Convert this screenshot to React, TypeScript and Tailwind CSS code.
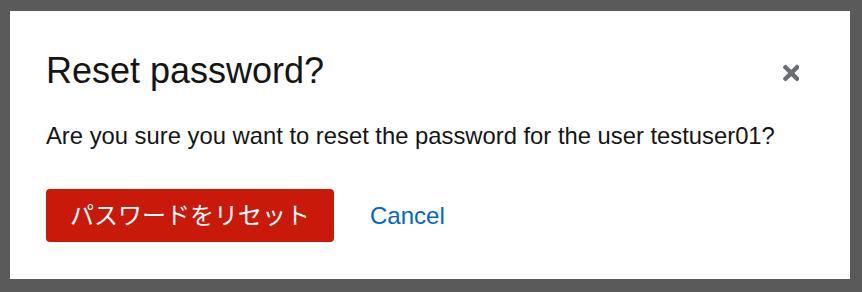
export default function App() {
  return (
    <div className="h-[292px] w-[862px] bg-[#5a5a5a] pl-[10px] pt-[11px] font-['Liberation_Sans','Noto_Sans_CJK_JP',sans-serif]">
      <div className="flex h-[268px] w-[840px] flex-col bg-white px-[36px] pt-[36px]">
        <div className="flex items-start justify-between">
          <h1 className="text-[36px] leading-[47px] text-[#151515]">Reset password?</h1>
          <button className="mr-[15px] mt-[14px] flex">
            <svg width="16.5" height="24" viewBox="0 0 352 512" fill="#6a6e73">
              <path d="M242.72 256l100.07-100.07c12.28-12.28 12.28-32.19 0-44.48l-22.24-22.24c-12.28-12.28-32.19-12.28-44.48 0L176 189.28 75.93 89.21c-12.28-12.28-32.19-12.28-44.48 0L9.21 111.45c-12.28 12.28-12.28 32.19 0 44.48L109.28 256 9.21 356.07c-12.28 12.28-12.28 32.19 0 44.48l22.24 22.24c12.28 12.28 32.2 12.28 44.48 0L176 322.72l100.07 100.07c12.28 12.28 32.2 12.28 44.48 0l22.24-22.24c12.28-12.28 12.28-32.19 0-44.48L242.72 256z" />
            </svg>
          </button>
        </div>
        <p className="mt-[24px] text-[23.8px] leading-[36px] text-[#151515]">
          Are you sure you want to reset the password for the user testuser01?
        </p>
        <div className="mt-[35px] flex items-center gap-[12px]">
          <button className="h-[53px] rounded-[4px] bg-[#c9190b] px-[24px] text-[24px] text-white">
            パスワードをリセット
          </button>
          <button className="px-[24px] text-[24px] leading-[36px] text-[#0066cc]">Cancel</button>
        </div>
      </div>
    </div>
  );
}
